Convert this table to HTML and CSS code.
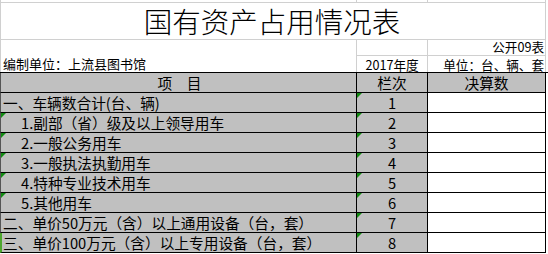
FILE: index.html
```html
<!DOCTYPE html>
<html lang="zh-CN">
<head>
<meta charset="utf-8">
<title>国有资产占用情况表</title>
<link rel="stylesheet" href="styles.css">
</head>
<body>
<div class="sheet">
  <div class="top">
    <div class="pre pre-a"></div>
    <div class="pre pre-b"></div>
    <div class="pre pre-c"></div>
    <div class="title">国有资产占用情况表</div>
    <div class="unit">编制单位：上流县图书馆</div>
    <div class="r2b"></div>
    <div class="r2c">公开09表</div>
    <div class="r3b">2017年度</div>
    <div class="r3c">单位：台、辆、套</div>
  </div>
  <div class="grid">
    <div class="c ca hd">项　目</div>
    <div class="c cb hd center">栏次</div>
    <div class="c cc hd center">决算数</div>

    <div class="c ca">一、车辆数合计(台、辆)</div>
    <div class="c cb center mark">1</div>
    <div class="c cc"></div>

    <div class="c ca sub mark">1.副部（省）级及以上领导用车</div>
    <div class="c cb center mark">2</div>
    <div class="c cc"></div>

    <div class="c ca sub mark">2.一般公务用车</div>
    <div class="c cb center mark">3</div>
    <div class="c cc"></div>

    <div class="c ca sub mark">3.一般执法执勤用车</div>
    <div class="c cb center mark">4</div>
    <div class="c cc"></div>

    <div class="c ca sub mark">4.特种专业技术用车</div>
    <div class="c cb center mark">5</div>
    <div class="c cc"></div>

    <div class="c ca sub mark">5.其他用车</div>
    <div class="c cb center mark">6</div>
    <div class="c cc"></div>

    <div class="c ca">二、单价50万元（含）以上通用设备（台，套）</div>
    <div class="c cb center mark">7</div>
    <div class="c cc"></div>

    <div class="c ca sel">三、单价100万元（含）以上专用设备（台，套）</div>
    <div class="c cb center mark">8</div>
    <div class="c cc"></div>
  </div>
</div>
</body>
</html>
```

FILE: styles.css
```css
* { box-sizing: border-box; }
html, body {
  margin: 0;
  padding: 0;
  background: #fff;
}
body {
  font-family: "Noto Sans CJK SC", "Noto Sans", sans-serif;
  color: #000;
  width: 548px;
  height: 254px;
  overflow: hidden;
}
.sheet { width: 548px; }

.top {
  display: grid;
  grid-template-columns: 357px 71px 118px;
  grid-template-rows: 3px 37px 16px 16px;
  font-size: 13px;
}
.pre {
  border-bottom: 1px solid #d0d0d0;
  border-right: 1px solid #d0d0d0;
}
.pre-a { border-left: 1px solid #d0d0d0; }
.title {
  grid-column: 1 / 4;
  border-left: 1px solid #d0d0d0;
  border-right: 1px solid #d0d0d0;
  border-bottom: 1px solid #d0d0d0;
  font-size: 28.5px;
  font-weight: 300;
  line-height: 36px;
  text-align: center;
  padding-right: 2px;
  white-space: nowrap;
}
.unit {
  grid-row: 3 / 5;
  grid-column: 1;
  border-left: 1px solid #d0d0d0;
  border-right: 1px solid #d0d0d0;
  display: flex;
  align-items: flex-end;
  padding-left: 2px;
  line-height: 16px;
  white-space: nowrap;
}
.r2b, .r2c, .r3b, .r3c {
  border-right: 1px solid #d0d0d0;
  white-space: nowrap;
  font-size: 12.6px;
}
.r2b, .r2c { border-bottom: 1px solid #d0d0d0; line-height: 13px; }
.r2c, .r3c { text-align: right; padding-right: 1px; }
.r3b, .r3c { line-height: 17px; }
.r3b { text-align: center; }

.grid {
  display: grid;
  grid-template-columns: 357px 71px 118px;
  grid-auto-rows: 20px;
  border-top: 1px solid #000;
  font-size: 14.7px;
}
.c {
  position: relative;
  border-right: 1px solid #000;
  border-bottom: 1px solid #000;
  line-height: 19px;
  white-space: nowrap;
  padding-left: 2px;
}
.ca {
  border-left: 1px solid #555;
  background: #c0c0c0;
}
.cb { background: #c0c0c0; }
.cc { background: #fff; }
.hd.cc { background: #c0c0c0; }
.hd { text-align: center; }
.center { text-align: center; padding-left: 0; }
.sub { padding-left: 20px; }
.sel { border-left: 2px solid #4ea72e; padding-left: 1px; }
.mark::before {
  content: "";
  position: absolute;
  left: 0;
  top: 0;
  width: 0;
  height: 0;
  border-top: 5px solid #138a13;
  border-right: 5px solid transparent;
}
```
